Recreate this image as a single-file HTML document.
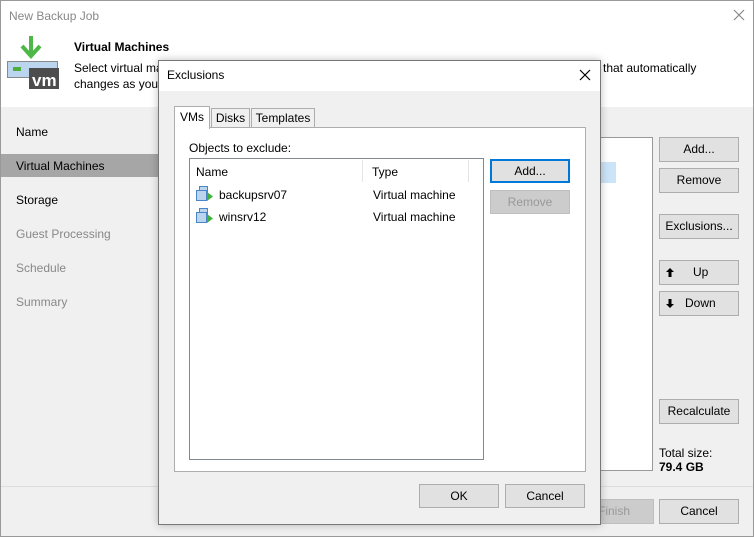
<html><head><style>
body{margin:0;width:754px;height:537px;position:relative;overflow:hidden;font-family:"Liberation Sans",sans-serif;font-size:12px;color:#000;background:#f0f0f0}
.a{position:absolute}
.btn{position:absolute;background:#e1e1e1;border:1px solid #adadad;box-sizing:border-box;text-align:center;font-size:12px;line-height:22px}
.nav{position:absolute;left:16px;font-size:12px}
</style></head><body>
<div class="a" style="left:0;top:0;width:754px;height:537px;box-sizing:border-box;border:1px solid #999"></div>
<div class="a" style="left:1px;top:1px;width:752px;height:106px;background:#fff"></div>
<div class="a" style="left:9px;top:9px;color:#888;font-size:12px">New Backup Job</div>
<svg class="a" style="left:733px;top:9px" width="12" height="12"><path d="M1 1L11 11M11 1L1 11" stroke="#888" stroke-width="1.2"/></svg>
<svg class="a" style="left:7px;top:36px" width="54" height="54"><rect x="0.5" y="25.5" width="50" height="16" fill="#bcd5ee" stroke="#888"/><rect x="6" y="31" width="8" height="4" fill="#4caf3a"/><rect x="22" y="32" width="30" height="21" fill="#4d4d4d"/><text x="25" y="50" fill="#fff" font-size="17" font-weight="bold" font-family="Liberation Sans">vm</text><path d="M24 0v20M15 10l9 10 9-10" stroke="#4db848" stroke-width="4" fill="none"/></svg>
<div class="a" style="left:74px;top:40px;font-weight:bold">Virtual Machines</div>
<div class="a" style="left:74px;top:61px">Select virtual ma</div>
<div class="a" style="left:74px;top:77px">changes as you</div>
<div class="a" style="left:603px;top:61px">that automatically</div>
<div class="nav" style="top:125px">Name</div>
<div class="a" style="left:1px;top:154px;width:157px;height:23px;background:#a6a6a6"></div>
<div class="nav" style="top:159px">Virtual Machines</div>
<div class="nav" style="top:193px">Storage</div>
<div class="nav" style="top:227px;color:#888">Guest Processing</div>
<div class="nav" style="top:261px;color:#888">Schedule</div>
<div class="nav" style="top:295px;color:#888">Summary</div>
<div class="a" style="left:560px;top:137px;width:93px;height:334px;background:#fff;border:1px solid #999;box-sizing:border-box"></div>
<div class="a" style="left:600px;top:162px;width:16px;height:21px;background:#cce4f7"></div>
<div class="btn" style="left:659px;top:137px;width:80px;height:25px">Add...</div>
<div class="btn" style="left:659px;top:168px;width:80px;height:25px">Remove</div>
<div class="btn" style="left:659px;top:214px;width:80px;height:25px">Exclusions...</div>
<div class="btn" style="left:659px;top:260px;width:80px;height:25px"><svg class="a" style="left:6px;top:7px" width="8" height="9"><path d="M4 0L0 4h2.5v5h3V4H8z" fill="#000"/></svg><span class="a" style="left:33px;top:0">Up</span></div>
<div class="btn" style="left:659px;top:291px;width:80px;height:25px"><svg class="a" style="left:6px;top:7px" width="8" height="9"><path d="M4 9L0 5h2.5V0h3v5H8z" fill="#000"/></svg><span class="a" style="left:25px;top:0">Down</span></div>
<div class="btn" style="left:659px;top:399px;width:80px;height:25px">Recalculate</div>
<div class="a" style="left:659px;top:446px">Total size:</div>
<div class="a" style="left:659px;top:460px;font-weight:bold">79.4 GB</div>
<div class="a" style="left:1px;top:486px;width:752px;height:1px;background:#ddd"></div>
<div class="btn" style="left:574px;top:499px;width:80px;height:25px;background:#ccc;border-color:#bfbfbf;color:#999">Finish</div>
<div class="btn" style="left:659px;top:499px;width:80px;height:25px">Cancel</div>

<div class="a" style="left:158px;top:60px;width:443px;height:465px;box-sizing:border-box;border:1px solid #777;background:#f0f0f0;box-shadow:0 0 8px rgba(0,0,0,.25)"></div>
<div class="a" style="left:159px;top:61px;width:441px;height:30px;background:#fff"></div>
<div class="a" style="left:167px;top:68px">Exclusions</div>
<svg class="a" style="left:579px;top:69px" width="12" height="12"><path d="M1 1L11 11M11 1L1 11" stroke="#000" stroke-width="1.2"/></svg>
<div class="a" style="left:174px;top:127px;width:412px;height:345px;background:#fff;border:1px solid #adadad;box-sizing:border-box"></div>
<div class="a" style="left:174px;top:106px;width:36px;height:23px;background:#fff;border:1px solid #adadad;border-bottom:none;box-sizing:border-box;text-align:center;line-height:21px">VMs</div>
<div class="a" style="left:211px;top:108px;width:39px;height:20px;background:#f0f0f0;border:1px solid #adadad;box-sizing:border-box;text-align:center;line-height:18px">Disks</div>
<div class="a" style="left:251px;top:108px;width:64px;height:20px;background:#f0f0f0;border:1px solid #adadad;box-sizing:border-box;text-align:center;line-height:18px">Templates</div>
<div class="a" style="left:189px;top:141px">Objects to exclude:</div>
<div class="a" style="left:189px;top:158px;width:295px;height:302px;border:1px solid #828790;box-sizing:border-box;background:#fff"></div>
<div class="a" style="left:362px;top:160px;width:1px;height:22px;background:#e5e5e5"></div>
<div class="a" style="left:468px;top:160px;width:1px;height:22px;background:#e5e5e5"></div>
<div class="a" style="left:196px;top:165px">Name</div>
<div class="a" style="left:372px;top:165px">Type</div>
<svg class="a" style="left:196px;top:186px" width="18" height="16"><rect x="3.5" y="0.5" width="8" height="7" fill="#bcd5ee" stroke="#4a86c5"/><rect x="0.5" y="4.5" width="10" height="10" fill="#bcd5ee" stroke="#4a86c5"/><path d="M11 6l6 4.5-6 4.5z" fill="#3fb23a"/></svg>
<div class="a" style="left:219px;top:188px">backupsrv07</div>
<div class="a" style="left:373px;top:188px">Virtual machine</div>
<svg class="a" style="left:196px;top:208px" width="18" height="16"><rect x="3.5" y="0.5" width="8" height="7" fill="#bcd5ee" stroke="#4a86c5"/><rect x="0.5" y="4.5" width="10" height="10" fill="#bcd5ee" stroke="#4a86c5"/><path d="M11 6l6 4.5-6 4.5z" fill="#3fb23a"/></svg>
<div class="a" style="left:219px;top:210px">winsrv12</div>
<div class="a" style="left:373px;top:210px">Virtual machine</div>
<div class="btn" style="left:490px;top:159px;width:80px;height:24px;border:2px solid #0078d7;line-height:20px">Add...</div>
<div class="btn" style="left:490px;top:190px;width:80px;height:24px;background:#ccc;border-color:#bfbfbf;color:#999">Remove</div>
<div class="btn" style="left:419px;top:484px;width:80px;height:24px">OK</div>
<div class="btn" style="left:505px;top:484px;width:80px;height:24px">Cancel</div>
</body></html>
